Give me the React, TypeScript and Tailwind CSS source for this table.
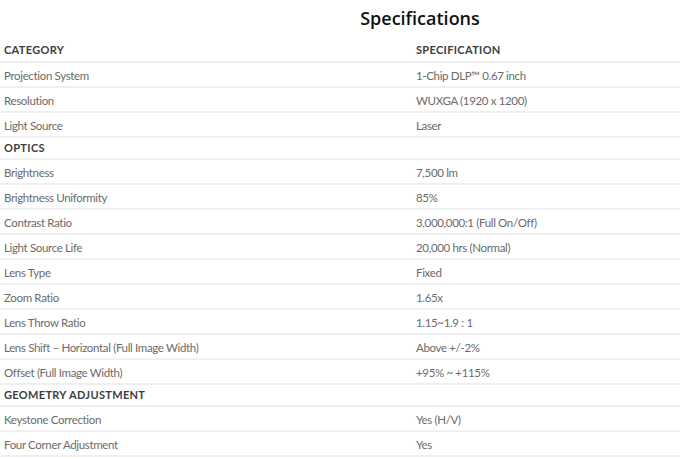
const sections: { title?: string; titleH?: string; rows: [string, string][] }[] = [
  {
    rows: [
      ["Projection System", "1-Chip DLP™ 0.67 inch"],
      ["Resolution", "WUXGA (1920 x 1200)"],
      ["Light Source", "Laser"],
    ],
  },
  {
    title: "OPTICS",
    titleH: "h-[22px]",
    rows: [
      ["Brightness", "7,500 lm"],
      ["Brightness Uniformity", "85%"],
      ["Contrast Ratio", "3,000,000:1 (Full On/Off)"],
      ["Light Source Life", "20,000 hrs (Normal)"],
      ["Lens Type", "Fixed"],
      ["Zoom Ratio", "1.65x"],
      ["Lens Throw Ratio", "1.15~1.9 : 1"],
      ["Lens Shift – Horizontal (Full Image Width)", "Above +/-2%"],
      ["Offset (Full Image Width)", "+95% ~ +115%"],
    ],
  },
  {
    title: "GEOMETRY ADJUSTMENT",
    titleH: "h-[22px]",
    rows: [
      ["Keystone Correction", "Yes (H/V)"],
      ["Four Corner Adjustment", "Yes"],
    ],
  },
];

export default function App() {
  return (
    <div className="h-[459px] w-[680px] overflow-hidden bg-white font-['Lato',sans-serif]">
      <h2 className="flex h-[38px] items-center justify-center pb-[2px] pl-[160px] font-['Open_Sans',sans-serif] text-[18px] font-semibold text-[#111]">
        Specifications
      </h2>

      <div className="text-[11.5px]">
        <div className="grid h-[25px] grid-cols-[412px_1fr] items-center border-b-2 border-[#efefef] pt-[2px] text-[11px] font-bold tracking-[0.03em] text-[#3d3d3d]">
          <span className="pl-1">CATEGORY</span>
          <span className="pl-1">SPECIFICATION</span>
        </div>

        {sections.map((section, i) => (
          <div key={i}>
            {section.title && (
              <div
                className={`flex ${section.titleH} items-center border-b-2 border-[#efefef] pl-1 pt-[1px] text-[11px] font-bold tracking-[0.03em] text-[#3d3d3d]`}
              >
                {section.title}
              </div>
            )}
            {section.rows.map(([label, value]) => (
              <div
                key={label}
                className="grid h-[25px] grid-cols-[412px_1fr] items-center border-b-2 border-[#efefef] pt-[2px] tracking-[-0.03em] text-[#6b6b6b]"
              >
                <span className="pl-1">{label}</span>
                <span className="pl-1">{value}</span>
              </div>
            ))}
          </div>
        ))}
      </div>
    </div>
  );
}
